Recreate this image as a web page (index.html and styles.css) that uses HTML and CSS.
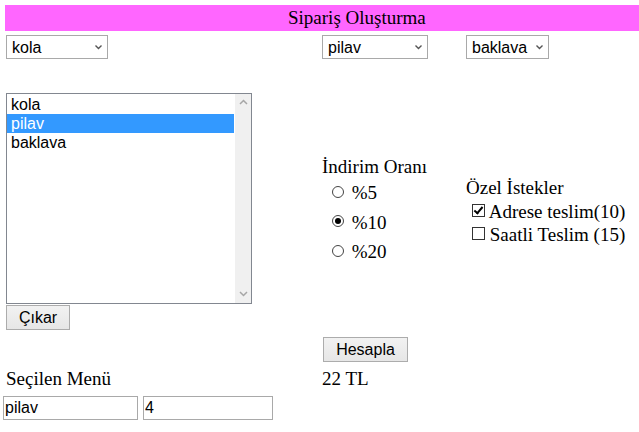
FILE: index.html
```html
<!DOCTYPE html>
<html lang="tr">
<head>
    <meta charset="UTF-8">
    <title>Sipariş Oluşturma</title>
    <link rel="stylesheet" href="styles.css">
</head>
<body>
    <div class="page">
        <div class="title">Sipariş Oluşturma</div>

        <div class="row top">
            <div class="sel w1">
                <select><option>kola</option></select>
                <svg class="arrow" width="7" height="5" viewBox="0 0 7 5"><polyline points="0.5,0.5 3.5,3.5 6.5,0.5" fill="none" stroke="#555" stroke-width="1.4"/></svg>
            </div>
            <div class="sel w2">
                <select><option>pilav</option></select>
                <svg class="arrow" width="7" height="5" viewBox="0 0 7 5"><polyline points="0.5,0.5 3.5,3.5 6.5,0.5" fill="none" stroke="#555" stroke-width="1.4"/></svg>
            </div>
            <div class="sel w3">
                <select><option>baklava</option></select>
                <svg class="arrow" width="7" height="5" viewBox="0 0 7 5"><polyline points="0.5,0.5 3.5,3.5 6.5,0.5" fill="none" stroke="#555" stroke-width="1.4"/></svg>
            </div>
        </div>

        <div class="row mid">
            <div class="cart">
                <div class="listbox">
                    <div class="items">
                        <div class="item">kola</div>
                        <div class="item selected">pilav</div>
                        <div class="item">baklava</div>
                    </div>
                    <div class="scrollbar">
                        <svg width="9" height="6" viewBox="0 0 9 6"><polyline points="1,5 4.5,1.5 8,5" fill="none" stroke="#a6a6a6" stroke-width="1.5"/></svg>
                        <svg width="9" height="6" viewBox="0 0 9 6"><polyline points="1,1 4.5,4.5 8,1" fill="none" stroke="#a6a6a6" stroke-width="1.5"/></svg>
                    </div>
                </div>
                <button class="btn remove">Çıkar</button>
            </div>

            <div class="discount">
                <div class="label">İndirim Oranı</div>
                <label class="opt"><input type="radio" name="oran"> %5</label>
                <label class="opt"><input type="radio" name="oran" checked> %10</label>
                <label class="opt"><input type="radio" name="oran"> %20</label>
            </div>

            <div class="extras">
                <div class="label">Özel İstekler</div>
                <label class="chk"><input type="checkbox" checked> Adrese teslim(10)</label>
                <label class="chk"><input type="checkbox"> Saatli Teslim (15)</label>
            </div>
        </div>

        <div class="row calc">
            <div></div>
            <button class="btn hesapla">Hesapla</button>
        </div>

        <div class="row result">
            <div>Seçilen Menü</div>
            <div>22 TL</div>
        </div>

        <div class="fields">
            <input type="text" class="f1" value="pilav">
            <input type="text" class="f2" value="4">
        </div>
    </div>
</body>
</html>
```

FILE: styles.css
```css
body {
    margin: 0;
    font-family: "Liberation Serif", "Times New Roman", serif;
    font-size: 19px;
    color: #000;
    background: #fff;
    overflow: hidden;
}

.page {
    padding: 5px 0 0 5px;
}

.title {
    height: 26px;
    line-height: 26px;
    padding-left: 283px;
    background-color: #ff66ff;
    white-space: nowrap;
}

.row {
    display: grid;
    grid-template-columns: 316px 144px 1fr;
    padding-left: 1px;
}

.row.top {
    margin-top: 4px;
    align-items: start;
}

.row.mid {
    margin-top: 34px;
    align-items: center;
}

.row.calc {
    margin-top: 7px;
}

.row.result {
    margin-top: 6px;
    line-height: 22px;
}

/* selects */
.sel {
    position: relative;
    height: 24px;
}

.sel.w1 { width: 102px; }
.sel.w2 { width: 106px; }
.sel.w3 { width: 83px; }

.sel select {
    appearance: none;
    -webkit-appearance: none;
    box-sizing: border-box;
    width: 100%;
    height: 24px;
    margin: 0;
    padding: 0 0 0 5px;
    border: 1px solid #a9a9a9;
    border-radius: 0;
    background: #fff;
    color: #000;
    font-family: "Liberation Sans", Arial, sans-serif;
    font-size: 16px;
    outline: none;
}

    .sel .arrow {
        position: absolute;
        right: 6px;
        top: 10px;
        pointer-events: none;
    }

/* list */
.cart {
    display: flex;
    flex-direction: column;
    align-items: flex-start;
}

.listbox {
    box-sizing: border-box;
    width: 246px;
    height: 211px;
    border: 1px solid #828790;
    display: flex;
    background: #fff;
}

.items {
    flex: 1;
    padding-top: 1px;
    font-family: "Liberation Sans", Arial, sans-serif;
    font-size: 16px;
}

.item {
    height: 19px;
    line-height: 19px;
    padding-left: 4px;
}

    .item.selected {
        background-color: #3399ff;
        color: #fff;
    }

.scrollbar {
    width: 16px;
    margin-left: 1px;
    background-color: #f0f0f0;
    display: flex;
    flex-direction: column;
    justify-content: space-between;
    align-items: center;
    padding: 5px 0 6px;
}

.btn {
    box-sizing: border-box;
    height: 25px;
    margin: 0;
    padding: 0;
    border: 1px solid #acacac;
    border-radius: 0;
    background: linear-gradient(#f2f2f2, #e6e6e6);
    color: #000;
    font-family: "Liberation Sans", Arial, sans-serif;
    font-size: 16px;
}

.btn.remove {
    width: 64px;
    margin-top: 1px;
}

.btn.hesapla {
    width: 85px;
    margin-left: 1px;
}

/* radios & checks */
.label {
    line-height: 22px;
}

.opt {
    display: flex;
    align-items: center;
    height: 29.5px;
    padding-left: 10px;
    white-space: pre;
}

.chk {
    display: flex;
    align-items: center;
    height: 23px;
    padding-left: 6px;
    white-space: pre;
}

.extras .label {
    margin-bottom: 1px;
}

input[type="radio"] {
    appearance: none;
    -webkit-appearance: none;
    box-sizing: border-box;
    width: 12px;
    height: 12px;
    margin: 0 3px 3px 0;
    border: 1px solid #444;
    border-radius: 50%;
    background: #fff;
    display: flex;
    align-items: center;
    justify-content: center;
}

    input[type="radio"]:checked::after {
        content: "";
        width: 6px;
        height: 6px;
        border-radius: 50%;
        background: #000;
    }

input[type="checkbox"] {
    appearance: none;
    -webkit-appearance: none;
    box-sizing: border-box;
    width: 13px;
    height: 13px;
    margin: 0 0 3px 0;
    border: 1px solid #333;
    background: #fff;
    position: relative;
}

    input[type="checkbox"]:checked::after {
        content: "";
        position: absolute;
        left: 3px;
        top: 0px;
        width: 3px;
        height: 7px;
        border-right: 2px solid #000;
        border-bottom: 2px solid #000;
        transform: rotate(40deg);
    }

/* bottom fields */
.fields {
    margin-top: 6px;
    margin-left: -2px;
    display: flex;
    gap: 5px;
}

    .fields input {
        box-sizing: border-box;
        height: 24px;
        margin: 0;
        padding: 0 1px;
        border: 1px solid #a9a9a9;
        font-family: "Liberation Sans", Arial, sans-serif;
        font-size: 16px;
        color: #000;
        outline: none;
    }

.f1 { width: 135px; }
.f2 { width: 130px; }
```
